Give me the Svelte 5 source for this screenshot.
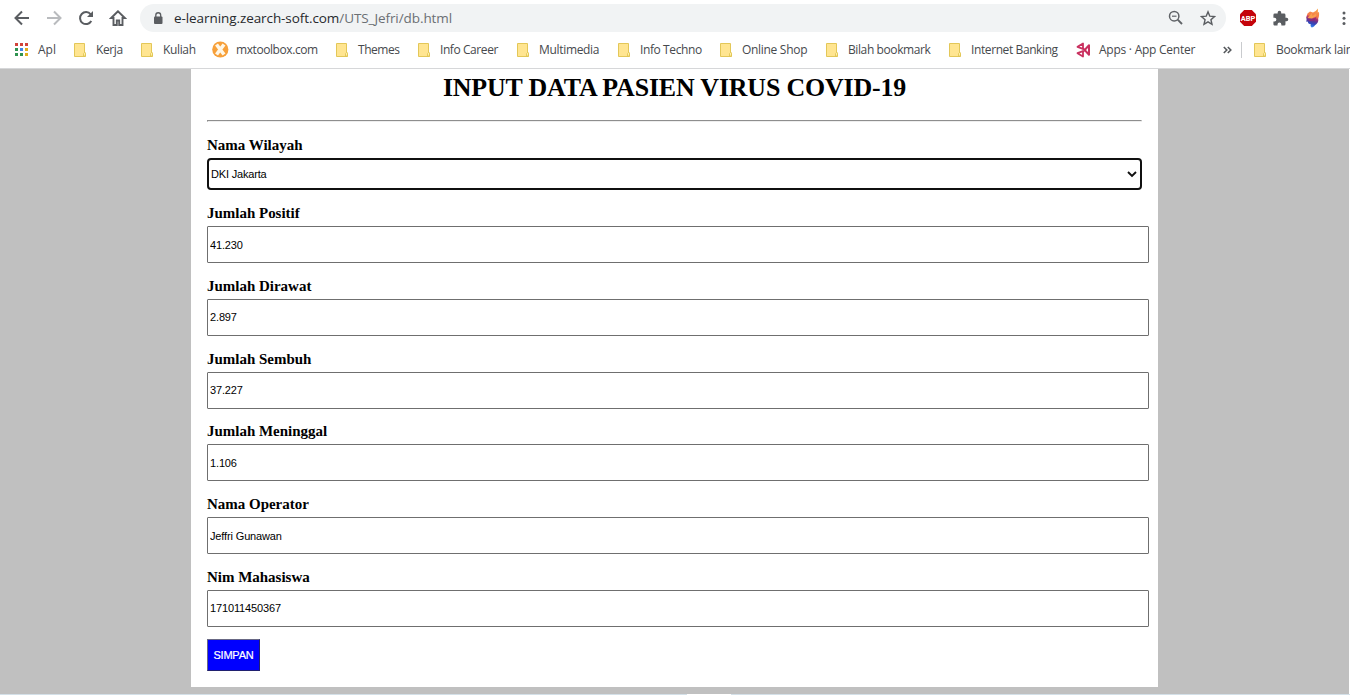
<script>
  const bookmarks = [
    { label: 'Apl', icon: 'apps', width: 59, gap: 23, spacing: 0 },
    { label: 'Kerja', icon: 'folder', width: 67, gap: 22, spacing: -0.4 },
    { label: 'Kuliah', icon: 'folder', width: 71, gap: 22, spacing: -0.35 },
    { label: 'mxtoolbox.com', icon: 'mx', width: 124, gap: 24, spacing: -0.42 },
    { label: 'Themes', icon: 'folder', width: 82, gap: 22, spacing: -0.45 },
    { label: 'Info Career', icon: 'folder', width: 99, gap: 22, spacing: -0.42 },
    { label: 'Multimedia', icon: 'folder', width: 101, gap: 22, spacing: -0.32 },
    { label: 'Info Techno', icon: 'folder', width: 102, gap: 22, spacing: -0.4 },
    { label: 'Online Shop', icon: 'folder', width: 106, gap: 22, spacing: -0.3 },
    { label: 'Bilah bookmark', icon: 'folder', width: 123, gap: 22, spacing: -0.4 },
    { label: 'Internet Banking', icon: 'folder', width: 127, gap: 22, spacing: -0.4 },
    { label: 'Apps · App Center', icon: 'center', width: 147, gap: 23, spacing: -0.25 }
  ];
  const fields = [
    ['Jumlah Positif', '41.230'],
    ['Jumlah Dirawat', '2.897'],
    ['Jumlah Sembuh', '37.227'],
    ['Jumlah Meninggal', '1.106'],
    ['Nama Operator', 'Jeffri Gunawan'],
    ['Nim Mahasiswa', '171011450367']
  ];
  const dots = [
    ['#d2433a', '#d2433a', '#d2433a'],
    ['#2f9350', '#3f86e8', '#e0ad1c'],
    ['#2f9350', '#2f9350', '#e0ad1c']
  ];
</script>

{#snippet folder()}
  <svg class="ico" width="13" height="16" viewBox="0 0 13 16">
    <path d="M.5 1.5h10v9.3h1v3.7H.5z" fill="#ffe591" stroke="#e3c758" />
    <path d="M9.5 14v-2.5l1-1 1 1V14z" fill="#fff0a8" stroke="#dfc34f" stroke-width=".8" />
  </svg>
{/snippet}

<div class="window">
  <header class="toolbar">
    <div class="nav">
      <svg width="16" height="16" viewBox="0 0 16 16"><path d="M15 8H2M8 1.5 1.5 8 8 14.500" fill="none" stroke="#5a5d61" stroke-width="2" /></svg>
      <svg width="16" height="16" viewBox="0 0 16 16"><path d="M1 8h13M8 1.500 14.500 8 8 14.500" fill="none" stroke="#b9bbbe" stroke-width="2" /></svg>
      <svg width="16" height="16" viewBox="0 0 16 16"><path d="M13.300 11A6 6 0 1 1 12.700 4.300" fill="none" stroke="#5a5d61" stroke-width="2" /><path d="M15 1v6H9z" fill="#5a5d61" /></svg>
      <svg width="18" height="18" viewBox="0 0 18 18"><path d="M9 2.300 2.200 9H4.500v7h3.300v-4.500h2.400V16h3.300V9h2.300z" fill="none" stroke="#5a5d61" stroke-width="1.900" /></svg>
    </div>
    <div class="address">
      <svg class="lock" width="10" height="13" viewBox="0 0 10 13"><rect x="1" y="4.500" width="8.500" height="7.500" rx="1" fill="#5a5d61" /><path d="M2.800 5V3.200a2.400 2.400 0 0 1 4.900 0V5" fill="none" stroke="#5a5d61" stroke-width="1.300" /></svg>
      <span class="url">e-learning.zearch-soft.com<span>/UTS_Jefri/db.html</span></span>
      <svg class="lens" width="16" height="16" viewBox="0 0 16 16"><circle cx="6.200" cy="6.200" r="4.700" fill="none" stroke="#606367" stroke-width="1.500" /><path d="M4 6.200h4.500" stroke="#606367" stroke-width="1.200" /><path d="m9.700 9.700 4.300 4.300" stroke="#606367" stroke-width="1.900" /></svg>
      <svg width="16" height="16" viewBox="0 0 24 24"><path d="m12 2.800 2.700 6.500 7 .6-5.300 4.600 1.600 6.900-6-3.700-6 3.700 1.600-6.900L2.300 9.900l7-.6z" fill="none" stroke="#5a5d61" stroke-width="2.100" /></svg>
    </div>
    <div class="extensions">
      <svg width="18" height="18" viewBox="0 0 18 18"><path d="M5.200 1h7.600L17 5.200v7.600L12.800 17H5.200L1 12.800V5.200z" fill="#c4030b" /><text x="9" y="11.800" text-anchor="middle" textLength="14.500" lengthAdjust="spacingAndGlyphs" fill="#fff" font-family="Roboto, sans-serif" font-size="8" font-weight="700">ABP</text></svg>
      <svg width="17" height="17" viewBox="0 0 24 24"><path d="M20.500 11H19V7a2 2 0 0 0-2-2h-4V3.500a2.500 2.500 0 0 0-5 0V5H4a2 2 0 0 0-2 2v3.800h1.500a2.700 2.700 0 0 1 0 5.400H2V20c0 1.100.9 2 2 2h3.800v-1.500a2.700 2.700 0 0 1 5.400 0V22H17a2 2 0 0 0 2-2v-4h1.500a2.500 2.500 0 0 0 0-5z" fill="#5a5d61" /></svg>
      <svg width="16" height="20" viewBox="0 0 16 20">
        <defs><linearGradient id="flame" x1=".6" y1="0" x2=".4" y2="1"><stop offset="0" stop-color="#f9a348" /><stop offset=".4" stop-color="#f57849" /><stop offset=".52" stop-color="#a63070" /><stop offset=".66" stop-color="#5e3495" /><stop offset=".8" stop-color="#3049be" /><stop offset="1" stop-color="#398cf2" /></linearGradient></defs>
        <path d="M13 .5 12.800 4.500 14 4c.3 3 0 5-.8 6.500.6 3-.8 5.500-3.200 6.700-.6 1.200-2 2-3.300 2.200-1.200-.8-1.400-2-.9-3.200-2 0-3-1-2.800-2.500L1 13.500C2 12 1.500 11 1.200 9.500L2.500 5.500 5 3.500l3 1C10 3.500 11.500 2.500 13 .5z" fill="url(#flame)" />
        <path d="M5.500 6.500 7 5l.5 3L11 5.500 11.500 8 7 10.500 2.500 10z" fill="#f9a04c" />
        <path d="M3 11.500c3 1 6 0 8.500-3-.5 3.500-3.500 5-7 4.500z" fill="#8e2878" />
      </svg>
      <svg class="more" width="4" height="15" viewBox="0 0 4 15"><g fill="#5a5d61"><circle cx="2" cy="2" r="1.500" /><circle cx="2" cy="7.200" r="1.500" /><circle cx="2" cy="12.400" r="1.500" /></g></svg>
    </div>
  </header>

  <nav class="bookmarks">
    {#each bookmarks as b}
      <div class="bookmark" style="width: {b.width}px">
        <span class="slot" style="width: {b.gap}px">
          {#if b.icon === 'folder'}
            {@render folder()}
          {:else if b.icon === 'apps'}
            <svg width="13" height="13" viewBox="0 0 13 13">
              {#each dots as row, y}{#each row as color, x}<rect x={x * 5} y={y * 5} width="3" height="3" fill={color} />{/each}{/each}
            </svg>
          {:else if b.icon === 'mx'}
            <svg width="17" height="17" viewBox="0 0 17 17"><circle cx="8.300" cy="8.500" r="8.100" fill="#f7a03a" /><path d="M4.500 3.500 12 13.500M12 3.500 4.500 13.500" stroke="#fff7e7" stroke-width="3.600" /></svg>
          {:else}
            <svg width="16" height="16" viewBox="0 0 16 16"><g fill="none" stroke="#c9305f" stroke-linejoin="round"><path d="M13 3.300v9.400L8.700 8z" stroke-width="2" /><path d="M7 1.500v5.300L1.500 4.800zM7 14.500V9.200l-5.500 2z" stroke-width="1.800" /><path d="M7 6.500 9 8 7 9.500" stroke-width="2" /></g></svg>
          {/if}
        </span>
        <span class="label" style="letter-spacing: {b.spacing}px">{b.label}</span>
      </div>
    {/each}
    <svg class="chevrons" width="9" height="8" viewBox="0 0 9 8"><path d="m.8 1 3 3-3 3M4.800 1l3 3-3 3" fill="none" stroke="#55585c" stroke-width="1.600" /></svg>
    <i class="divider"></i>
    <span class="slot">{@render folder()}</span>
    <span class="label last">Bookmark lain</span>
  </nav>

  <main>
    <form onsubmit={(e) => e.preventDefault()}>
      <h1>INPUT DATA PASIEN VIRUS COVID-19</h1>
      <hr />
      <div class="field region">
        <label for="region">Nama Wilayah</label>
        <div class="select">
          <select id="region"><option>DKI Jakarta</option></select>
          <svg width="10" height="7" viewBox="0 0 10 7"><path d="m1 1 4 4 4-4" fill="none" stroke="#101010" stroke-width="1.900" /></svg>
        </div>
      </div>
      {#each fields as [label, value], i}
        <div class="field">
          <label for="field{i}">{label}</label>
          <input id="field{i}" type="text" {value} />
        </div>
      {/each}
      <button type="submit">SIMPAN</button>
    </form>
  </main>
  <footer><i></i></footer>
</div>

<style>
  :global(body) { margin: 0; overflow: hidden; background: #fff; }
  * { box-sizing: border-box; }
  svg { display: block; flex: none; }
  .window { width: 1350px; height: 695px; overflow: hidden; display: flex; flex-direction: column; font-family: 'Open Sans', 'Noto Sans', sans-serif; }
  .toolbar { height: 36px; flex: none; display: flex; align-items: center; }
  .nav { width: 140px; padding-left: 14px; display: flex; align-items: center; gap: 16px; flex: none; }
  .nav svg:last-child { margin-left: -1px; }
  .address { width: 1086px; height: 28px; border-radius: 14px; background: #f1f3f4; display: flex; align-items: center; padding: 0 10px 0 13px; }
  .url { margin-left: 11px; color: #27292c; font-size: 13.500px; letter-spacing: -.08px; white-space: nowrap; flex: 1; }
  .url span { color: #6b6f73; }
  .lens { margin-right: 16px; }
  .extensions { display: flex; align-items: center; padding-left: 13px; }
  .extensions svg:nth-child(2) { margin-left: 15px; }
  .extensions svg:nth-child(3) { margin-left: 16px; }
  .more { margin-left: 21px; }
  .bookmarks { height: 33px; flex: none; display: flex; align-items: center; padding: 0 0 5px 15px; border-bottom: 1px solid #d6d7d9; overflow: hidden; }
  .bookmark { display: flex; align-items: center; flex: none; }
  .slot { width: 22px; flex: none; display: flex; align-items: center; }
  .label { font-size: 12px; line-height: 16px; color: #46494d; white-space: nowrap; }
  .last { letter-spacing: -.3px; width: 74px; overflow: hidden; }
  .chevrons { width: 9px; }
  .divider { width: 1px; height: 16px; background: #c9cbce; margin: 0 12px 0 9px; flex: none; }
  main { height: 625px; width: 1349px; background: #c0c0c0; padding-left: 191px; flex: none; }
  form { width: 967px; height: 618px; background: #fff; padding: 4px 16px 0; font-family: 'Liberation Serif', serif; color: #000; }
  h1 { margin: 0; height: 47px; line-height: 30px; font-size: 25.900px; letter-spacing: -.15px; text-align: center; }
  hr { height: 2px; margin: 0 0 15px; border: 1px solid; border-color: #8e8e8e #eee #eee #8e8e8e; }
  .field { height: 72.800px; }
  .region { height: 68px; }
  label { display: block; height: 21px; line-height: 17px; font-size: 14.980px; font-weight: 700; }
  input { display: block; width: 942px; height: 37px; border: 1px solid #6f6f6f; border-radius: 1px; padding: 1px 2px; background: #fff; color: #000; font: 11px 'Liberation Sans', Arial, sans-serif; letter-spacing: -.14px; outline: 0; }
  .select { display: flex; align-items: center; width: 935px; height: 32px; border: 2px solid #101010; border-radius: 4px; padding-right: 3px; }
  select { appearance: none; flex: 1; height: 28px; border: 0; background: transparent; padding: 0 2px; color: #000; font: 11px 'Liberation Sans', Arial, sans-serif; letter-spacing: -.18px; outline: 0; }
  button { display: block; width: 53px; height: 32px; margin-top: -3px; padding: 0; border: 1px solid; border-color: #686884 #202070 #202070 #686884; background: #00f; color: #fff; font: 11px 'Liberation Sans', Arial, sans-serif; letter-spacing: -.2px; -webkit-text-stroke: .2px #fff; }
  footer { height: 1px; background: #d4e0e8; flex: none; padding-left: 687px; }
  footer i { display: block; width: 44px; height: 1px; background: #fff; }
</style>
